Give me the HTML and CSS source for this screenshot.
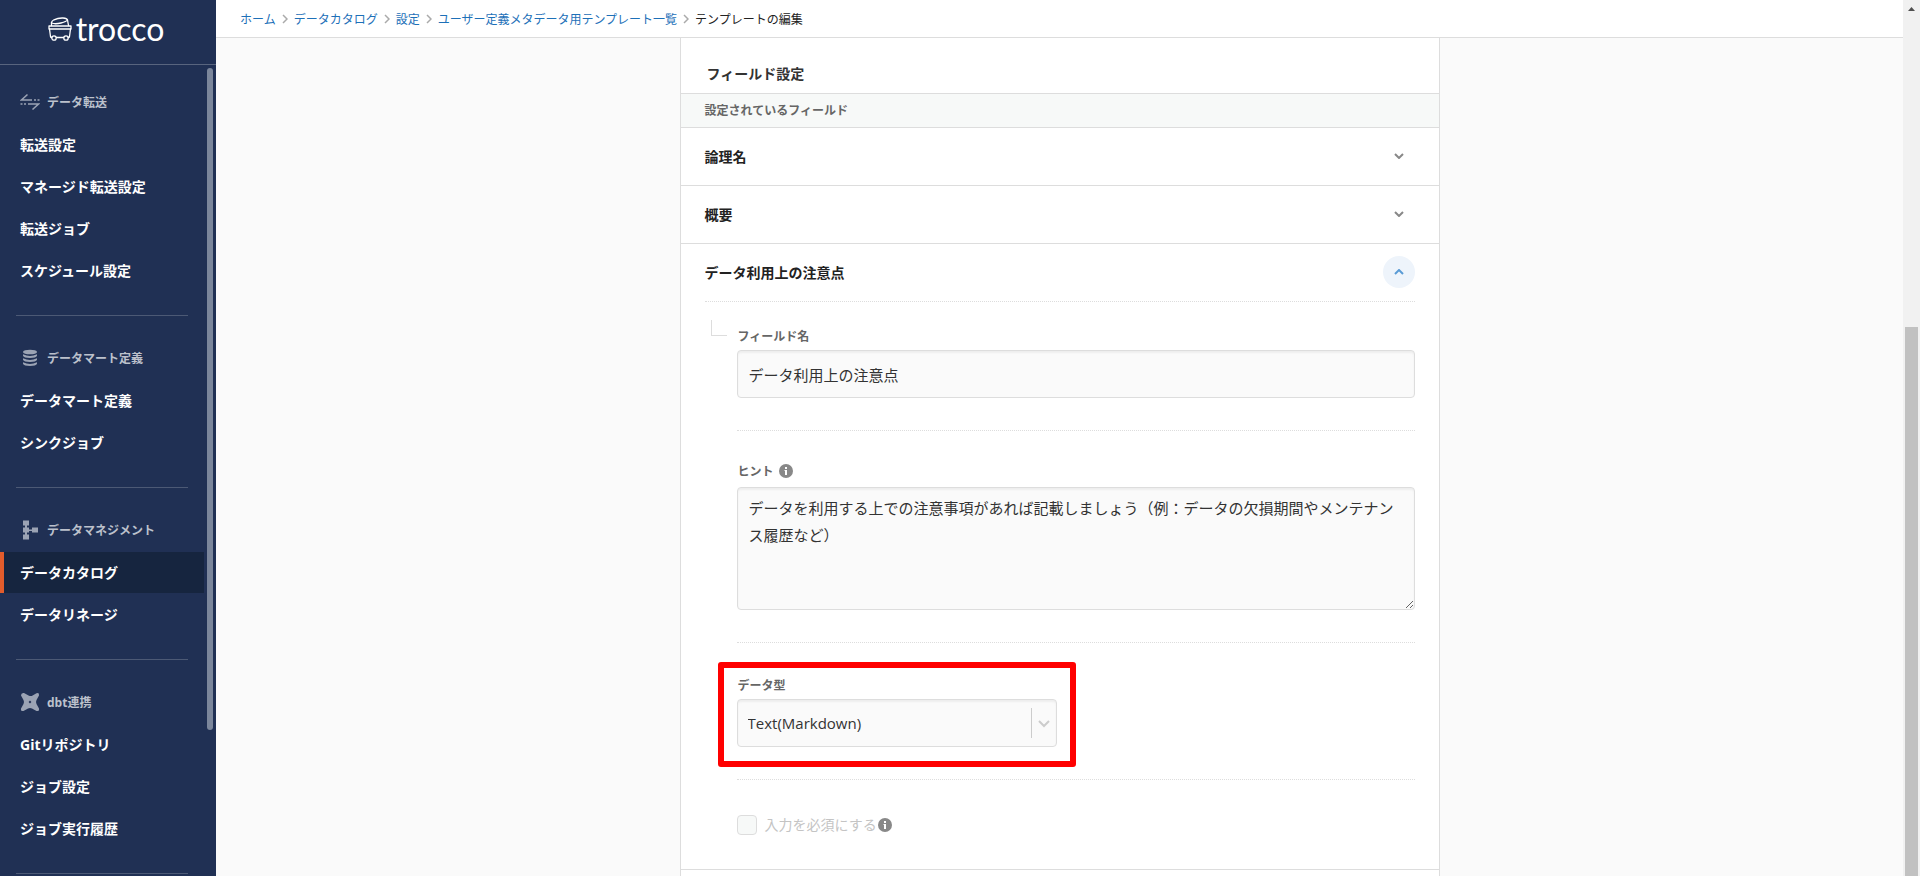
FILE: index.html
```html
<!DOCTYPE html>
<html lang="ja">
<head>
<meta charset="utf-8">
<title>テンプレートの編集 | trocco</title>
<link rel="stylesheet" href="styles.css">
</head>
<body>
<div class="app">
  <aside class="sidebar">
    <a class="logo" href="#">
      <svg class="logo-mark" viewBox="0 0 24 24" fill="none" stroke="currentColor" stroke-width="1.300" stroke-linejoin="round" stroke-linecap="round">
        <path d="M3.500 8.500V5.500Q3.800 4 6 2.800Q10 .800 15 1Q19 1.300 19.500 3L20.500 8.500"/>
        <path d="M3.500 6Q7 7.500 13 6Q18.500 4.500 19.500 3"/>
        <path d="M1 9H23V12H1Z"/>
        <path d="M1.500 12L2.500 19.500Q2.700 20.500 3.700 20.500M22.500 12L21.500 19.500Q21.300 20.500 20.300 20.500M8.500 20.500H15.500"/>
        <circle cx="6" cy="21" r="2.200"/><circle cx="18" cy="21" r="2.200"/>
      </svg>
      <span class="logo-text">trocco</span>
    </a>
    <div class="menu">
      <nav class="groups">
        <section class="group">
          <h2 class="group-title">
            <svg class="group-icon" viewBox="0 0 20 20" fill="none" stroke="currentColor" stroke-width="1.500"><path d="M7.500 2.500L1.500 8H12M14 8h2M17.500 8h2M12.500 17.500L18.500 12H8M6 12H4M2.500 12H.500"/></svg>データ転送</h2>
          <a class="item" href="#">転送設定</a>
          <a class="item" href="#">マネージド転送設定</a>
          <a class="item" href="#">転送ジョブ</a>
          <a class="item" href="#">スケジュール設定</a>
        </section>
        <section class="group">
          <h2 class="group-title">
            <svg class="group-icon" viewBox="0 0 20 20" fill="currentColor"><ellipse cx="10" cy="4" rx="7" ry="2.300"/><path d="M3 6.200Q10 9.600 17 6.200V7.800Q16 10 10 10T3 7.800ZM3 10.200Q10 13.600 17 10.200V11.800Q16 14 10 14T3 11.800ZM3 14.200Q10 17.600 17 14.200V15.800Q16 18 10 18T3 15.800Z"/></svg>データマート定義</h2>
          <a class="item" href="#">データマート定義</a>
          <a class="item" href="#">シンクジョブ</a>
        </section>
        <section class="group">
          <h2 class="group-title">
            <svg class="group-icon" viewBox="0 0 20 20" fill="currentColor"><path d="M3 .500h6v5H7v2h2v2h3V7.500h6v5h-6v-1.500H9v1.500H7v2h2v5H3v-5h2v-2H3v-5h2v-2H3Z"/></svg>データマネジメント</h2>
          <a class="item item-active" href="#" aria-current="page">データカタログ</a>
          <a class="item" href="#">データリネージ</a>
        </section>
        <section class="group">
          <h2 class="group-title">
            <svg class="group-icon" viewBox="0 0 20 20" fill="currentColor" fill-rule="evenodd"><path d="M4 1L9 3.700Q11 4.700 13 3.200L16.500 1.200Q19.500 .500 19 3.500L16.500 8Q15.500 10 16.500 12L19 16.500Q19.500 19.500 16.500 19L12 16.500Q10 15.500 8 16.500L3.500 19Q.500 19.500 1 16.500L3.500 12Q4.500 10 3.500 8L1 3.500Q1 .500 4 1ZM10 8.600L8.600 10L10 11.400L11.400 10Z"/></svg>dbt連携</h2>
          <a class="item" href="#">Gitリポジトリ</a>
          <a class="item" href="#">ジョブ設定</a>
          <a class="item" href="#">ジョブ実行履歴</a>
        </section>
        <section class="group"></section>
      </nav>
      <div class="menu-scroll"></div>
    </div>
  </aside>

  <div class="page">
    <nav class="breadcrumb" aria-label="パンくず">
      <a href="#">ホーム</a>
      <svg class="crumb-arrow" viewBox="0 0 6 10"><path d="M1 1l4 4-4 4"/></svg>
      <a href="#">データカタログ</a>
      <svg class="crumb-arrow" viewBox="0 0 6 10"><path d="M1 1l4 4-4 4"/></svg>
      <a href="#">設定</a>
      <svg class="crumb-arrow" viewBox="0 0 6 10"><path d="M1 1l4 4-4 4"/></svg>
      <a href="#">ユーザー定義メタデータ用テンプレート一覧</a>
      <svg class="crumb-arrow" viewBox="0 0 6 10"><path d="M1 1l4 4-4 4"/></svg>
      <span>テンプレートの編集</span>
    </nav>
    <main class="content">
      <form class="panel">
        <h1 class="panel-title">フィールド設定</h1>
        <h2 class="panel-band">設定されているフィールド</h2>
        <section class="row">
          <header class="row-head"><h3>論理名</h3>
            <button class="toggle" type="button" aria-label="開く"><svg viewBox="0 0 10 6"><path d="M1 1l4 4 4-4"/></svg></button></header>
        </section>
        <section class="row">
          <header class="row-head"><h3>概要</h3>
            <button class="toggle" type="button" aria-label="開く"><svg viewBox="0 0 10 6"><path d="M1 1l4 4 4-4"/></svg></button></header>
        </section>
        <section class="row">
          <header class="row-head"><h3>データ利用上の注意点</h3>
            <button class="toggle toggle-open" type="button" aria-label="閉じる"><svg viewBox="0 0 10 6"><path d="M1 5l4-4 4 4"/></svg></button></header>
          <div class="row-body">
            <div class="branch"></div>
            <div class="fields">
              <div class="field">
                <label class="label" for="name">フィールド名</label>
                <input class="control" id="name" type="text" value="データ利用上の注意点">
              </div>
              <div class="field field-hint">
                <label class="label" for="hint">ヒント
                  <svg class="info" viewBox="0 0 14 14"><circle cx="7" cy="7" r="7"/><path d="M6 3h2v2H6zM5.500 6H8v5H6V7h-.500z"/></svg></label>
                <textarea class="control hint" id="hint">データを利用する上での注意事項があれば記載しましょう（例：データの欠損期間やメンテナンス履歴など）</textarea>
              </div>
              <div class="field">
                <div class="marked">
                  <label class="label" for="type">データ型</label>
                  <div class="select">
                    <select class="control" id="type"><option>Text(Markdown)</option></select>
                    <svg class="select-arrow" viewBox="0 0 26 30"><path class="bar" d="M.500 0v30"/><path class="chev" d="M8 13l5 5 5-5"/></svg>
                  </div>
                </div>
              </div>
              <div class="field field-check">
                <input class="check" id="required" type="checkbox" disabled>
                <label class="check-label" for="required">入力を必須にする</label>
                <svg class="info" viewBox="0 0 14 14"><circle cx="7" cy="7" r="7"/><path d="M6 3h2v2H6zM5.500 6H8v5H6V7h-.500z"/></svg>
              </div>
            </div>
          </div>
        </section>
        <section class="row row-next"></section>
      </form>
    </main>
  </div>

  <div class="scrollbar">
    <svg class="scroll-arrow" viewBox="0 0 7 4"><path d="M0 4L3.500 0 7 4z"/></svg>
    <div class="scroll-thumb"></div>
  </div>
</div>
</body>
</html>
```
FILE: styles.css
```css
* { box-sizing: border-box; }
body, h1, h2, h3 { margin: 0; }
body, button, input, textarea, select {
  font-family: "Open Sans", "Noto Sans CJK JP", sans-serif;
}
body { color: #222; font-size: 14px; overflow: hidden; }
a { text-decoration: none; }

.app { display: flex; height: 100vh; }

/* Sidebar */
.sidebar {
  flex: 0 0 216px;
  display: flex;
  flex-direction: column;
  background: #203054;
  color: #fff;
  overflow: hidden;
}
.logo {
  flex: 0 0 65px;
  display: flex;
  align-items: center;
  justify-content: center;
  gap: 4px;
  padding-bottom: 6px;
  padding-right: 4px;
  border-bottom: 1px solid #58647e;
  color: #fff;
}
.logo-mark { width: 24px; height: 24px; }
.logo-text { font-family: Lato, sans-serif; font-size: 32px; line-height: 32px; }
.menu { flex: 1; display: flex; min-height: 0; }
.groups { flex: 1; overflow: hidden; }
.menu-scroll { width: 6px; height: 662px; margin: 3px 3px 0 0; border-radius: 3px; background: #7b869b; }
.group { padding-bottom: 23px; }
.group::before {
  content: "";
  display: block;
  height: 1px;
  margin: 0 19px 32px 16px;
  background: #4c5975;
}
.group:first-child::before { height: 0; margin-bottom: 27px; }
.group-title {
  display: flex;
  align-items: center;
  gap: 7px;
  height: 20px;
  margin-bottom: 12px;
  padding-left: 20px;
  color: #bcc1cc;
  font-size: 12px;
}
.group-icon { width: 20px; height: 20px; color: #9ba3b4; }
.item {
  display: flex;
  align-items: center;
  height: 41px;
  margin: 0 3px 1px 0;
  padding: 0 0 2px 16px;
  border-left: 4px solid transparent;
  color: #fff;
  font-weight: 700;
}
.item-active { border-left-color: #e25c2c; background: #16253f; }

/* Page */
.page { flex: 1; min-width: 0; display: flex; flex-direction: column; background: #fafafa; }
.breadcrumb {
  flex: 0 0 38px;
  display: flex;
  align-items: center;
  gap: 6px;
  padding: 1px 0 0 24px;
  border-bottom: 1px solid #ddd;
  background: #fff;
  font-size: 12px;
}
.breadcrumb a { color: #1d70b8; }
.crumb-arrow { width: 6px; height: 10px; fill: none; stroke: #aaa; stroke-width: 1.5; }
.content { flex: 1; min-height: 0; overflow: hidden; display: flex; padding: 0 24px; }
.panel {
  width: 100%;
  max-width: 760px;
  margin: 0 auto;
  border: solid #ddd;
  border-width: 0 1px;
  background: #fff;
}
.panel-title { padding: 26px 26px 9px; font-size: 14px; line-height: 20px; color: #333; }
.panel-band {
  padding: 7px 24px;
  border: solid #ddd;
  border-width: 1px 0;
  background: #f7f9f8;
  color: #666;
  font-size: 12px;
  line-height: 19px;
}
.row { padding: 0 24px; border-bottom: 1px solid #ddd; }
.row-next { border-bottom: 0; }
.row-head { display: flex; align-items: center; justify-content: space-between; height: 57px; padding-bottom: 2px; }
.row-head h3 { font-size: 14px; }
.toggle {
  display: flex;
  align-items: center;
  justify-content: center;
  width: 32px;
  height: 32px;
  padding: 0;
  border: 0;
  border-radius: 50%;
  background: none;
}
.toggle svg { width: 10px; height: 6px; fill: none; stroke: #888; stroke-width: 2; }
.toggle-open { background: #eef4fb; }
.toggle-open svg { stroke: #5a9bd5; }

.row-body { display: flex; gap: 10px; border-top: 1px dotted #ddd; padding-left: 6px; }
.branch { width: 16px; height: 16px; margin-top: 18px; border: solid #ddd; border-width: 0 0 1px 1px; }
.fields { flex: 1; min-width: 0; }
.field { padding: 32px 0; border-bottom: 1px dotted #ddd; }
.field:first-child { padding-top: 24px; }
.label {
  display: flex;
  align-items: center;
  gap: 5px;
  height: 20px;
  margin-bottom: 4px;
  padding-left: 1px;
  color: #666;
  font-size: 12px;
  font-weight: 700;
}
.field-hint { padding-top: 30px; }
.field-hint .label { margin-bottom: 6px; }
.info { width: 14px; height: 14px; fill: #888; }
.info path { fill: #fff; }
.control {
  display: block;
  width: 100%;
  height: 48px;
  margin: 0;
  padding: 0 11px;
  border: 1px solid #ddd;
  border-radius: 4px;
  background: #fafafa;
  box-shadow: inset 0 2px 2px #eee;
  color: #333;
  font-size: 15px;
}
.hint { height: 123px; padding: 7px 11px; line-height: 27px; resize: both; }
.marked {
  margin: -13px 0 -20px -19px;
  width: 358px;
  padding: 7px 13px 14px;
  border: 6px solid #f00;
  border-radius: 3px;
}
.select { display: grid; align-items: center; }
.select > * { grid-area: 1 / 1; }
.select select { appearance: none; padding: 0 36px 0 10px; }
.select-arrow { justify-self: end; width: 26px; height: 30px; fill: none; pointer-events: none; }
.select-arrow .bar { stroke: #ccc; }
.select-arrow .chev { stroke: #ccc; stroke-width: 2; }

.field-check { display: flex; align-items: center; padding: 35px 0 34px; border: 0; }
.check {
  appearance: none;
  width: 20px;
  height: 20px;
  margin: 0 8px 0 0;
  border: 1px solid #ddd;
  border-radius: 4px;
  background: #f7f9f8;
}
.check-label { margin-right: 1px; color: #c4c4c4; line-height: 20px; }

/* Window scrollbar */
.scrollbar { flex: 0 0 17px; display: flex; flex-direction: column; align-items: center; background: #f1f1f1; }
.scroll-arrow { flex: none; width: 7px; height: 4px; margin: 7px 0 316px; fill: #505050; }
.scroll-thumb { flex: 1; width: 13px; background: #c1c1c1; }
```
